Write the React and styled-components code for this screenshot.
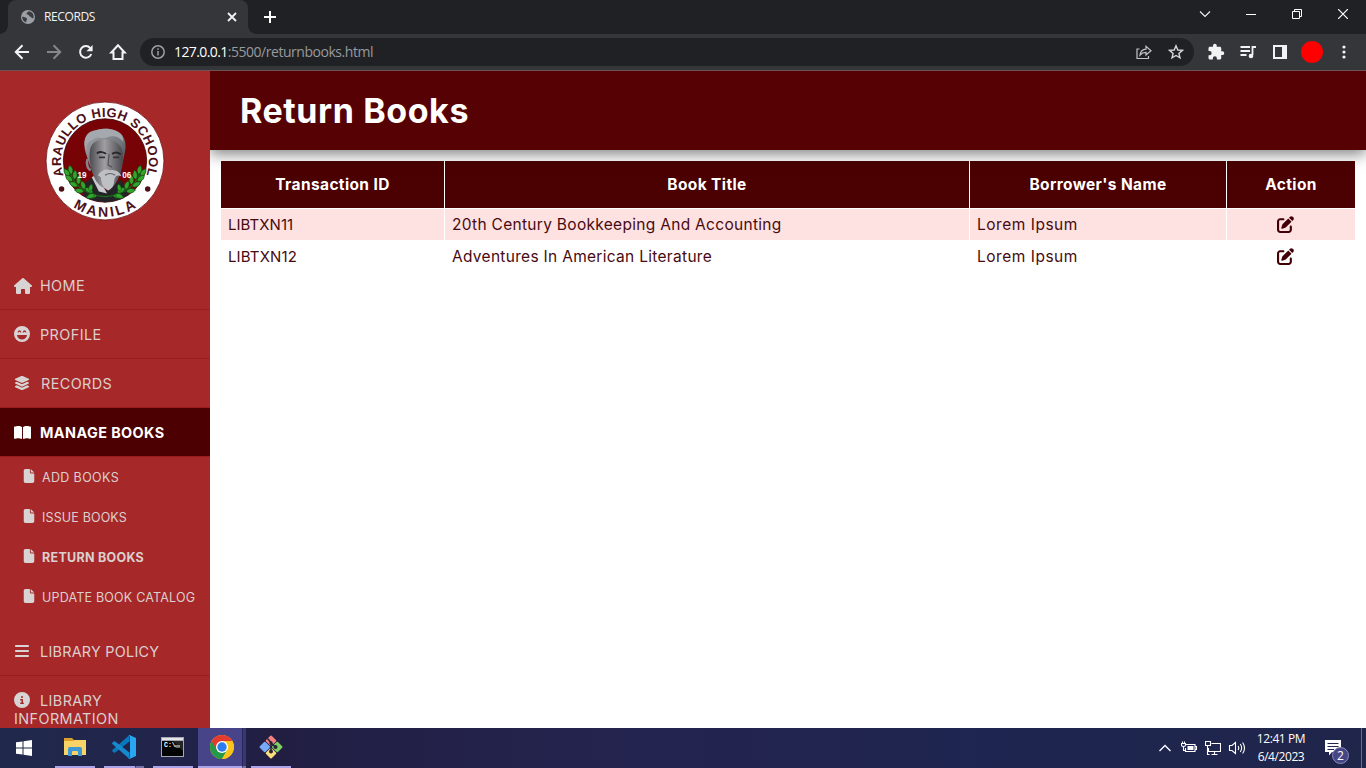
import React from "react";
import styled, { createGlobalStyle } from "styled-components";
import {
  FaHouse,
  FaFaceLaughBeam,
  FaLayerGroup,
  FaBookOpen,
  FaFile,
  FaBars,
  FaCircleInfo,
  FaPenToSquare,
} from "react-icons/fa6";

const GlobalStyle = createGlobalStyle`
  * { box-sizing: border-box; }
  body { margin: 0; overflow: hidden; background: #fff; }
`;

const ui = `"Open Sans", "Noto Sans", sans-serif`;

const Screen = styled.div`
  width: 1366px;
  height: 768px;
  display: flex;
  flex-direction: column;
  overflow: hidden;
  font-family: Inter, sans-serif;
`;

/* ---------- browser chrome ---------- */

const TabStrip = styled.div`
  height: 34px;
  flex: none;
  display: flex;
  background: #202124;
  padding-left: 8px;
`;

const Tab = styled.div`
  position: relative;
  width: 240px;
  height: 34px;
  display: flex;
  align-items: center;
  padding: 0 10px 0 13px;
  background: #35363a;
  border-radius: 8px 8px 0 0;
  color: #f1f3f4;
  font: 12px/34px ${ui};

  &::before,
  &::after {
    content: "";
    position: absolute;
    bottom: 0;
    width: 8px;
    height: 8px;
  }
  &::before {
    left: -8px;
    background: radial-gradient(circle at 0 0, transparent 7.5px, #35363a 8px);
  }
  &::after {
    right: -8px;
    background: radial-gradient(circle at 100% 0, transparent 7.5px, #35363a 8px);
  }
  svg { display: block; flex: none; }
`;

const TabTitle = styled.span`
  flex: 1;
  margin-left: 9px;
  letter-spacing: -0.38px;
`;

const NewTab = styled.div`
  width: 44px;
  display: flex;
  align-items: center;
  justify-content: center;
`;

const WindowButtons = styled.div`
  margin-left: auto;
  display: flex;
  height: 28px;
`;

const WindowButton = styled.div`
  width: 46px;
  display: flex;
  align-items: center;
  justify-content: center;
`;

const Toolbar = styled.div`
  height: 37px;
  flex: none;
  display: flex;
  align-items: center;
  padding: 0 6px;
  background: #35363a;
  border-bottom: 1px solid #6e5255;
`;

const ToolButton = styled.div`
  width: 32px;
  height: 28px;
  flex: none;
  display: flex;
  align-items: center;
  justify-content: center;
`;

const AddressBar = styled.div`
  width: 1054px;
  height: 28px;
  margin: 0 6px;
  display: flex;
  align-items: center;
  padding: 0 2px 0 10px;
  border-radius: 14px;
  background: #202124;
`;

const Url = styled.div`
  flex: 1;
  margin-left: 8px;
  color: #989a9d;
  font: 14px/28px ${ui};
  letter-spacing: -0.46px;
`;

const Host = styled.span`
  color: #fff;
  letter-spacing: -0.6px;
`;

const Avatar = styled.div`
  width: 22px;
  height: 22px;
  border-radius: 50%;
  background: #fe0000;
`;

/* ---------- page ---------- */

const Page = styled.div`
  height: 657px;
  flex: none;
  display: flex;
  overflow: hidden;
`;

const Sidebar = styled.aside`
  position: relative;
  z-index: 2;
  width: 210px;
  flex: none;
  background: #a62829;
`;

const LogoBox = styled.div`
  height: 190px;
  padding: 30px 0 0 45px;
  svg { display: block; }
`;

const NavItem = styled.div`
  min-height: 49px;
  padding: 16px 14px 0;
  border-bottom: 1px solid ${(p) => (p.$last ? "transparent" : "#981e20")};
  color: ${(p) => (p.$active ? "#fff" : "#dccfcf")};
  background: ${(p) => (p.$active ? "#4c0001" : "transparent")};
  font-size: 14.4px;
  font-weight: ${(p) => (p.$active ? 700 : 400)};
  line-height: 18px;
  letter-spacing: ${(p) => p.$spacing || 0.42}px;
`;

const NavIcon = styled.span`
  display: inline-block;
  width: ${(p) => p.$width || 26}px;
  height: 16px;
  vertical-align: -2px;
  svg { display: block; color: ${(p) => (p.$active ? "#fff" : "#d8d4d4")}; }
`;

const SubMenu = styled.div`
  padding-bottom: 10px;
`;

const SubItem = styled.div`
  height: 40px;
  display: flex;
  align-items: center;
  padding: 1px 0 0 22px;
  color: #dccfcf;
  font-size: 12.5px;
  font-weight: ${(p) => (p.$active ? 700 : 400)};
  letter-spacing: ${(p) => p.$spacing}px;
  white-space: nowrap;
  svg { margin: -3px 6px 0 0; color: #d8d4d4; flex: none; }
`;

const Main = styled.main`
  flex: 1;
  background: #fff;
`;

const PageHeader = styled.header`
  position: relative;
  z-index: 1;
  height: 79px;
  padding-left: 30px;
  background: #560103;
  box-shadow: 0 4px 14px rgba(0, 0, 0, 0.5);
  color: #fff;
  font-size: 34px;
  font-weight: 700;
  line-height: 79px;
  letter-spacing: 0.58px;
`;

const Table = styled.div`
  display: grid;
  grid-template-columns: 223px 524px 256px 128px;
  grid-template-rows: 47px 31px 31px;
  gap: 1px;
  margin: 11px 0 0 11px;
`;

const HeadCell = styled.div`
  background: #4b0001;
  color: #fff;
  font-size: 15.5px;
  font-weight: 700;
  line-height: 47px;
  letter-spacing: 0.37px;
  text-align: center;
`;

const Cell = styled.div`
  padding-left: 7px;
  background: ${(p) => (p.$tint ? "#fee1e1" : "#fff")};
  color: #480a10;
  font-size: ${(p) => p.$size || 15.5}px;
  line-height: 31px;
  letter-spacing: ${(p) => p.$spacing || 0.3}px;
`;

const ActionCell = styled(Cell)`
  display: flex;
  align-items: center;
  justify-content: center;
  padding: 0 11px 0 0;
  color: #420006;
`;

/* ---------- taskbar ---------- */

const Taskbar = styled.div`
  height: 40px;
  flex: none;
  display: flex;
  background: linear-gradient(90deg, #1f294b 0%, #22244b 12%, #211e42 20%, #24244f 45%, #1e2650 75%, #20254a 100%);
`;

const StartButton = styled.div`
  width: 48px;
  display: flex;
  align-items: center;
  justify-content: center;
`;

const TaskApp = styled.div`
  width: ${(p) => p.$width || 40}px;
  margin-left: ${(p) => p.$gap}px;
  display: flex;
  align-items: center;
  padding-left: ${(p) => p.$inset}px;
  border-bottom: 2px solid #aba4e8;
  background: ${(p) => (p.$active ? "#474489" : "transparent")};
  svg { display: block; flex: none; }
`;

const StackEdge = styled.div`
  width: ${(p) => p.$width}px;
  border-bottom: 2px solid #7672a4;
  border-left: 1px solid ${(p) => (p.$active ? "#28275a" : "transparent")};
  background: ${(p) => (p.$active ? "#39376f" : "transparent")};
`;

const Tray = styled.div`
  margin-left: auto;
  display: flex;
  align-items: center;
  padding-right: 4px;
  color: #fff;
  svg { display: block; }
`;

const TrayIcon = styled.div`
  width: 24px;
  display: flex;
  justify-content: center;
`;

const Clock = styled.div`
  width: 64px;
  text-align: center;
  font: 12px/18px ${ui};
  letter-spacing: -0.42px;
  padding-bottom: 1px;
`;

const Notifications = styled.div`
  position: relative;
  width: 49px;
  height: 40px;
  padding: 12px 0 0 12px;
  border-right: 1px solid #686b8a;
`;

const Badge = styled.span`
  position: absolute;
  left: 19px;
  top: 19px;
  width: 17px;
  height: 17px;
  border: 1px solid #8a8cba;
  border-radius: 50%;
  background: #464586;
  font: 12px/15px ${ui};
  text-align: center;
`;

/* ---------- drawings ---------- */

const Line = ({ d, size = 20, w = 2, color = "#f1f3f4", children }) => (
  <svg width={size} height={size} viewBox={`0 0 ${size} ${size}`} fill="none" stroke={color} strokeWidth={w}>
    {d && <path d={d} />}
    {children}
  </svg>
);

const Leaf = ({ x, y, r, s = 1 }) => (
  <path
    d="M0 0C-3-2-3-6 0-9C3-6 3-2 0 0Z"
    transform={`translate(${x} ${y}) rotate(${r}) scale(${s})`}
    fill="#31a52e"
    stroke="#11420f"
    strokeWidth=".6"
  />
);

const laurel = [
  [25, 71, -12], [23, 73, -35], [28, 76, 5], [26, 78, -48], [32, 81, 0],
  [31, 83, -62], [38, 86, -20], [37, 88, -80], [46, 89, -60], [50, 92, -95],
];

const SchoolSeal = () => (
  <svg width="120" height="120" viewBox="-1 -1 118 118">
    <defs>
      <path id="sealTop" d="M17.300 72.300A43.200 43.200 0 1 1 98.700 72.300" />
      <path id="sealBottom" d="M16 93.2A54.500 54.500 0 0 0 100 93.2" />
      <clipPath id="sealClip"><circle cx="58" cy="57.5" r="41" /></clipPath>
      <linearGradient id="hairShade" x1="0" y1="0" x2="1" y2="1">
        <stop offset="0" stopColor="#a5a9ae" />
        <stop offset=".55" stopColor="#767a80" />
        <stop offset="1" stopColor="#303237" />
      </linearGradient>
      <linearGradient id="faceShade" x1="0" y1="0" x2="1" y2="0">
        <stop offset="0" stopColor="#4c4b4f" />
        <stop offset=".45" stopColor="#a09ea1" />
        <stop offset="1" stopColor="#49484d" />
      </linearGradient>
    </defs>
    <circle cx="58" cy="58" r="58" fill="#fff" stroke="#6c1016" strokeWidth=".8" />
    <circle cx="58" cy="57.5" r="41" fill="#780306" stroke="#3f0306" strokeWidth=".8" />
    <g clipPath="url(#sealClip)">
      <path d="M37 94L39 79L48 73L58 88L74 76L82 93L72 100H44Z" fill="#242328" />
      <path d="M45 74L50 71L60 90L52 88Z" fill="#c9cbd0" />
      <path d="M39 50C36 38 39 28 49 28C56 25 70 26 74 32C79 37 79 45 77 52L73 73L49 76L43 62Z" fill="url(#hairShade)" />
      <path d="M43 49C44 40 49 38 54 37C63 35 73 39 75 48C77 59 73 77 65 84C59 88 50 82 47 73C44 66 42 56 43 49Z" fill="url(#faceShade)" />
      <path d="M40 48C39 43 41 38 46 37C50 33 54 37 60 35C66 32 72 34 76 39L75 33C68 25 54 25 46 29C37 32 36 41 40 48Z" fill="#a5a9ae" />
      <path d="M50 50.500C53 48.500 57 49 59 51M65 51C68 49 71 49.500 73.500 51.500" stroke="#28272b" strokeWidth="1.900" fill="none" />
      <path d="M52 54.500H58M66 54.500H72" stroke="#343238" strokeWidth="1.800" />
      <path d="M62 51L61 62L65 64" stroke="#55535a" strokeWidth="1.2" fill="none" />
      <path d="M41 56C39 60 41 66 44 67" stroke="#83858b" strokeWidth="2.5" fill="none" />
      <path d="M51 72C54 67 59 65.500 63 67C68 66 73 69 74 73C70 71 68 73 67 77C67 83 64 86 61 87C57 85 54 80 54 74Z" fill="#bfc0c4" />
      <path d="M58 72C61 70 65 70 68 72" stroke="#64636a" strokeWidth="1" fill="none" />
    </g>
    {[0, 1].map((side) => (
      <g key={side} transform={side ? "translate(116 0) scale(-1 1)" : undefined}>
        <path d="M23 66C25 81 40 92 58 93" stroke="#176b1a" strokeWidth="1.3" fill="none" />
        {laurel.map(([x, y, r], i) => <Leaf key={i} x={x} y={y} r={r} />)}
        <Leaf x={48} y={91} r={-110} />
        <Leaf x={43} y={88} r={15} s={0.85} />
      </g>
    ))}
    <g fill="#fff" fontFamily="Liberation Sans, sans-serif" fontSize="8" fontWeight="700">
      <text x="31" y="74.5">19</text>
      <text x="75" y="74.5">06</text>
    </g>
    <g fill="#4d1019" fontFamily="Liberation Sans, sans-serif" fontWeight="700">
      <text fontSize="12.800" letterSpacing=".45">
        <textPath href="#sealTop" startOffset="50%" textAnchor="middle">ARAULLO HIGH SCHOOL</textPath>
      </text>
      <text fontSize="13.800" letterSpacing="2.400">
        <textPath href="#sealBottom" startOffset="51%" textAnchor="middle">MANILA</textPath>
      </text>
    </g>
    <circle cx="15.3" cy="85.5" r="2.7" fill="#4d1019" />
    <circle cx="100" cy="85.5" r="2.7" fill="#4d1019" />
  </svg>
);

const Globe = () => (
  <svg width="14" height="14" viewBox="0 0 14 14">
    <circle cx="7" cy="7" r="7" fill="#9aa0a6" />
    <path d="M1.2 6.5L4.5 7.5C6 8 6.5 9 5.5 10.5L5 12.3C2.5 11.5 1 9.500 1.200 6.500ZM7.500 1.300C7 2.500 5.800 2.300 5.500 3.500C5.500 4.800 7.500 4.200 8 5.500C8.300 6.800 10 6.500 10.500 7.500C11 8.600 11.800 8.500 12.500 8C13.200 4.500 11 1.500 7.500 1.300Z" fill="#3b3c40" />
  </svg>
);

const ChromeLogo = () => (
  <svg width="24" height="24" viewBox="0 0 24 24">
    <circle cx="12" cy="12" r="12" fill="#fbc116" />
    <path d="M12 12L1.610 6A12 12 0 0 0 12 24L17.200 15Z" fill="#229a4a" />
    <path d="M1.610 6A12 12 0 0 1 22.390 6H12L6.800 15Z" fill="#e33b2e" />
    <path d="M12 6H22.390A12 12 0 0 1 12 24L17.200 15Z" fill="#fcc31b" />
    <circle cx="12" cy="12" r="6" fill="#fff" />
    <circle cx="12" cy="12" r="4.700" fill="#2b7cee" />
  </svg>
);

const VsCodeLogo = () => (
  <svg width="24" height="24" viewBox="0 0 24 24">
    <path d="M17.500 6.500L3.200 17.500C2.600 18 2.200 17.900 1.700 17.500L.4 16.300C-.1 15.800 0 15.300 .4 14.900L17.500 0Z" fill="#0879bd" />
    <path d="M17.500 17.500L3.200 6.500C2.600 6 2.200 6.100 1.700 6.500L.4 7.700C-.1 8.200 0 8.700 .4 9.100L17.500 24Z" fill="#1689cf" />
    <path d="M17.500 0L24 3V21L17.500 24C17 24 16.500 23.600 16.300 23.200C17.500 23.500 18 22.700 18 22V2C18 1.200 17.200 .4 16.300 .8Z" fill="#29a6f1" />
  </svg>
);

const ExplorerLogo = () => (
  <svg width="22" height="20" viewBox="0 0 22 20">
    <path d="M0 1H8L10 3H21V6H0Z" fill="#dca12c" />
    <path d="M0 4H9L11 3H22V18H0Z" fill="#fad367" />
    <path d="M4 19V12Q4 10 6 10H16Q18 10 18 12V19H14V15Q14 14 13 14H9Q8 14 8 15V19Z" fill="#3d98d5" />
  </svg>
);

const TerminalLogo = () => (
  <svg width="23" height="20" viewBox="0 0 23 20">
    <rect width="23" height="20" fill="#a5a8b0" />
    <rect x="1" y="1" width="21" height="2" fill="#e4e4e6" />
    <path d="M1 4H22V19H1Z" fill="#030303" />
    <path d="M12 4H22V14Z" fill="#252525" />
    <text x="3" y="9.500" fontSize="6.500" fontWeight="700" fontFamily="Liberation Mono, monospace" fill="#fff">C:\_</text>
    <path d="M14 9H19" stroke="#fff" />
  </svg>
);

const GitLogo = () => (
  <svg width="24" height="24" viewBox="0 0 24 24">
    <g transform="rotate(45 12 12)">
      <rect x="3.600" y="3.600" width="8" height="8" rx="1" fill="#78aafa" transform="rotate(-90 12 12)" />
      <rect x="3.600" y="3.600" width="8" height="8" rx="1" fill="#f58080" />
      <rect x="12.400" y="3.600" width="8" height="8" rx="1" fill="#80cf63" />
      <rect x="12.400" y="12.400" width="8" height="8" rx="1" fill="#fae07b" />
    </g>
    <path d="M8.500 3.500L12 7.500V17M12 8L16.500 12" stroke="#252239" strokeWidth="1.500" fill="none" />
    <circle cx="12" cy="8" r="1.700" fill="#252239" />
    <circle cx="12" cy="16.500" r="2" fill="#252239" />
    <circle cx="16.500" cy="12" r="2" fill="#252239" />
  </svg>
);

const rows = [
  ["LIBTXN11", "20th Century Bookkeeping And Accounting", 0.04],
  ["LIBTXN12", "Adventures In American Literature", 0.13],
];

const subItems = [
  ["ADD BOOKS", 0.36],
  ["ISSUE BOOKS", 0.15],
  ["RETURN BOOKS", 0.29, true],
  ["UPDATE BOOK CATALOG", 0.2],
];

export default function App() {
  return (
    <Screen>
      <GlobalStyle />
      <TabStrip>
        <Tab>
          <Globe />
          <TabTitle>RECORDS</TabTitle>
          <Line size={12} w={1.8} d="M2 2L10 10M10 2L2 10" />
        </Tab>
        <NewTab><Line size={14} d="M7 1V13M1 7H13" color="#fff" /></NewTab>
        <WindowButtons>
          <WindowButton><Line size={12} w={1.1} d="M1 3.500L6 8.500L11 3.500" /></WindowButton>
          <WindowButton><Line size={10} w={1} d="M0 5.500H10" color="#fff" /></WindowButton>
          <WindowButton><Line size={10} w={1} d="M.5 2.500H7.500V9.500H.5ZM2.500 2.500V.5H9.500V7.500H7.500" color="#fff" /></WindowButton>
          <WindowButton><Line size={10} w={1.2} d="M0 0L10 10M10 0L0 10" color="#fff" /></WindowButton>
        </WindowButtons>
      </TabStrip>

      <Toolbar>
        <ToolButton><Line size={16} d="M15 8H2M8.500 1.300L1.800 8L8.500 14.700" /></ToolButton>
        <ToolButton><Line size={16} d="M1 8H14M7.500 1.300L14.200 8L7.500 14.700" color="#85878a" /></ToolButton>
        <ToolButton>
          <Line size={16} d="M13.300 10A5.800 5.800 0 1 1 12.300 4.100">
            <path d="M14.600 1V7.200H8.400Z" fill="#f1f3f4" stroke="none" />
          </Line>
        </ToolButton>
        <ToolButton><Line size={18} d="M9 2.300L2.300 9.500H4.500V16H13.500V9.500H15.700Z" /></ToolButton>
        <AddressBar>
          <Line size={16} w={1.5} color="#9aa0a6">
            <circle cx="8" cy="8" r="6.200" />
            <path d="M8 7V11.500M8 4.300V5.800" />
          </Line>
          <Url><Host>127.0.0.1</Host>:5500/returnbooks.html</Url>
          <ToolButton>
            <Line size={16} w={1.200} color="#c2c4c7">
              <path d="M3.500 5H1V14.500H12.500V12" />
              <path d="M4 11C4.500 7.500 6.500 5.500 10 5.200V2.300L15 6.700L10 11V8.300C7.500 8.300 5.700 9 4 11Z" />
            </Line>
          </ToolButton>
          <ToolButton><Line size={16} w={1.400} color="#d5d7da" d="M8 1.800L9.800 6L14.400 6.400L10.900 9.400L12 13.900L8 11.500L4 13.900L5.100 9.400L1.600 6.400L6.200 6Z" /></ToolButton>
        </AddressBar>
        <ToolButton>
          <svg width="18" height="18" viewBox="0 0 24 24" fill="#f1f3f4">
            <path d="M20.500 11H19V7c0-1.100-.9-2-2-2h-4V3.500a2.500 2.500 0 0 0-5 0V5H4c-1.100 0-2 .9-2 2v3.800h1.500a2.700 2.700 0 0 1 0 5.400H2V20c0 1.100.9 2 2 2h3.800v-1.500a2.700 2.700 0 0 1 5.400 0V22H17c1.100 0 2-.9 2-2v-4h1.500a2.500 2.500 0 0 0 0-5z" />
          </svg>
        </ToolButton>
        <ToolButton>
          <Line size={18} w={1.800}>
            <path d="M1.500 4H11M1.500 8H11M1.500 12H7.500M13.500 12V4H17" />
            <circle cx="12" cy="13" r="2.300" fill="#f1f3f4" stroke="none" />
          </Line>
        </ToolButton>
        <ToolButton>
          <Line size={14}>
            <rect x="1" y="1" width="12" height="12" />
            <path d="M9 1H13V13H9Z" fill="#f1f3f4" stroke="none" />
          </Line>
        </ToolButton>
        <ToolButton><Avatar /></ToolButton>
        <ToolButton>
          <svg width="4" height="14" viewBox="0 0 4 14" fill="#f1f3f4">
            <circle cx="2" cy="2" r="1.600" /><circle cx="2" cy="7" r="1.600" /><circle cx="2" cy="12" r="1.600" />
          </svg>
        </ToolButton>
      </Toolbar>

      <Page>
        <Sidebar>
          <LogoBox><SchoolSeal /></LogoBox>
          <NavItem><NavIcon><FaHouse size={18} /></NavIcon>HOME</NavItem>
          <NavItem><NavIcon><FaFaceLaughBeam size={16} /></NavIcon>PROFILE</NavItem>
          <NavItem><NavIcon $width={27}><FaLayerGroup size={16} /></NavIcon>RECORDS</NavItem>
          <NavItem $active><NavIcon $active><FaBookOpen size={17} /></NavIcon>MANAGE BOOKS</NavItem>
          <SubMenu>
            {subItems.map(([label, spacing, active]) => (
              <SubItem key={label} $spacing={spacing} $active={active}>
                <FaFile size={14} />
                {label}
              </SubItem>
            ))}
          </SubMenu>
          <NavItem $spacing={0.25}><NavIcon><FaBars size={16} /></NavIcon>LIBRARY POLICY</NavItem>
          <NavItem $last><NavIcon><FaCircleInfo size={16} /></NavIcon>LIBRARY INFORMATION</NavItem>
        </Sidebar>
        <Main>
          <PageHeader>Return Books</PageHeader>
          <Table>
            <HeadCell>Transaction ID</HeadCell>
            <HeadCell>Book Title</HeadCell>
            <HeadCell>Borrower's Name</HeadCell>
            <HeadCell>Action</HeadCell>
            {rows.map(([id, title, spacing], i) => (
              <React.Fragment key={id}>
                <Cell $tint={i === 0} $size={15} $spacing={spacing}>{id}</Cell>
                <Cell $tint={i === 0}>{title}</Cell>
                <Cell $tint={i === 0} $spacing={0.52}>Lorem Ipsum</Cell>
                <ActionCell $tint={i === 0}><FaPenToSquare size={17} /></ActionCell>
              </React.Fragment>
            ))}
          </Table>
        </Main>
      </Page>

      <Taskbar>
        <StartButton>
          <svg width="16" height="16" viewBox="0 0 16 16" fill="#fff">
            <path d="M0 2.300L6.500 1.400V7.500H0ZM7.500 1.200L16 0V7.500H7.500ZM0 8.500H6.500V14.600L0 13.700ZM7.500 8.500H16V16L7.500 14.800Z" />
          </svg>
        </StartButton>
        <TaskApp $gap={7} $inset={9}><ExplorerLogo /></TaskApp>
        <TaskApp $gap={9} $inset={8} $width={31}><VsCodeLogo /></TaskApp>
        <StackEdge $width={9} />
        <TaskApp $gap={9} $inset={8}><TerminalLogo /></TaskApp>
        <TaskApp $gap={5} $inset={12} $width={44} $active><ChromeLogo /></TaskApp>
        <StackEdge $width={4} $active />
        <TaskApp $gap={5} $inset={8}><GitLogo /></TaskApp>
        <Tray>
          <TrayIcon><Line size={12} w={1.300} color="#fff" d="M.5 9L6 3.500L11.500 9" /></TrayIcon>
          <TrayIcon>
            <Line size={16} w={1.100} color="#fff">
              <path d="M5 4.500H14V11.500H4.500V8M14.500 6.500H15.500V9.500H14.500" />
              <path d="M6.500 6H12.500V10H6.500Z" fill="#fff" stroke="none" />
              <path d="M.5 3.500H4.500V5Q4.500 6.500 2.500 6.500Q.5 6.500 .5 5ZM1.500 3.500V1.500M3.500 3.500V1.500M2.500 6.500V10.500H4.500" />
            </Line>
          </TrayIcon>
          <TrayIcon>
            <Line size={16} w={1.100} color="#fff">
              <path d="M6.500 3.500H15.500V11.500H3.500V8M9.500 11.500V14.500M6.500 14.500H12.500" />
              <path d="M.5 1.500H5.500V5.500H.5ZM2.500 5.500V14.500H4.500" />
            </Line>
          </TrayIcon>
          <TrayIcon>
            <Line size={18} w={1.100} color="#fff">
              <path d="M1.500 6.500H4L7.500 3.500V14.500L4 11.500H1.500Z" />
              <path d="M10 7Q11.500 9 10 11M12.300 5Q15 9 12.300 13M14.600 3.500Q18.500 9 14.600 14.500" />
            </Line>
          </TrayIcon>
          <Clock><div>12:41 PM</div><div>6/4/2023</div></Clock>
          <Notifications>
            <svg width="16" height="16" viewBox="0 0 16 16">
              <path d="M0 0H16V12H7L4 15.500V12H0Z" fill="#fff" />
              <path d="M2.500 3.500H13.500M2.500 6.500H13.500M2.500 9.500H9" stroke="#24264b" />
            </svg>
            <Badge>2</Badge>
          </Notifications>
        </Tray>
      </Taskbar>
    </Screen>
  );
}
